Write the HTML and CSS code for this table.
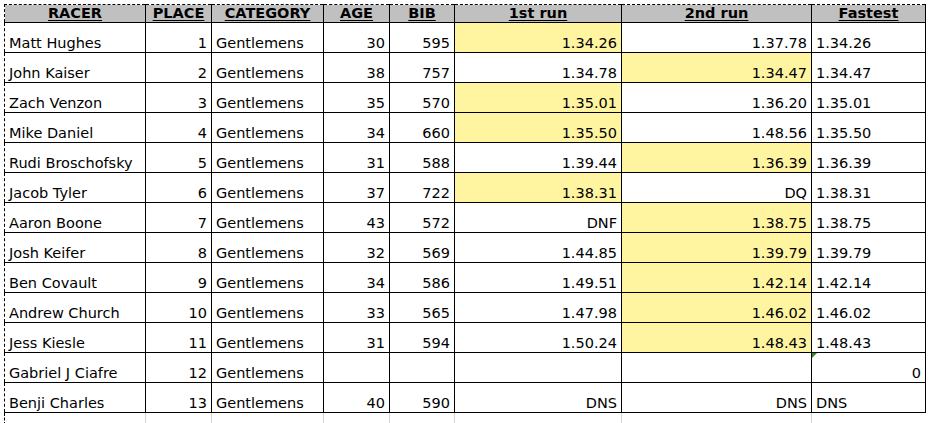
FILE: index.html
```html
<!DOCTYPE html>
<html>
<head>
<meta charset="utf-8">
<link rel="stylesheet" href="styles.css">
</head>
<body>
<table class="sheet">
  <colgroup>
    <col class="c-racer"><col class="c-place"><col class="c-cat"><col class="c-age"><col class="c-bib"><col class="c-run1"><col class="c-run2"><col class="c-fast">
  </colgroup>
  <thead>
    <tr>
      <th><u>RACER</u></th><th><u>PLACE</u></th><th><u>CATEGORY</u></th><th><u>AGE</u></th><th><u>BIB</u></th><th><u>1st run</u></th><th class="pb"><u>2nd run</u></th><th><u>Fastest</u></th>
    </tr>
  </thead>
  <tbody>
    <tr><td>Matt Hughes</td><td class="r">1</td><td>Gentlemens</td><td class="r">30</td><td class="r">595</td><td class="r hl">1.34.26</td><td class="r pb">1.37.78</td><td>1.34.26</td></tr>
    <tr><td>John Kaiser</td><td class="r">2</td><td>Gentlemens</td><td class="r">38</td><td class="r">757</td><td class="r">1.34.78</td><td class="r pb hl">1.34.47</td><td>1.34.47</td></tr>
    <tr><td>Zach Venzon</td><td class="r">3</td><td>Gentlemens</td><td class="r">35</td><td class="r">570</td><td class="r hl">1.35.01</td><td class="r pb">1.36.20</td><td>1.35.01</td></tr>
    <tr><td>Mike Daniel</td><td class="r">4</td><td>Gentlemens</td><td class="r">34</td><td class="r">660</td><td class="r hl">1.35.50</td><td class="r pb">1.48.56</td><td>1.35.50</td></tr>
    <tr><td>Rudi Broschofsky</td><td class="r">5</td><td>Gentlemens</td><td class="r">31</td><td class="r">588</td><td class="r">1.39.44</td><td class="r pb hl">1.36.39</td><td>1.36.39</td></tr>
    <tr><td>Jacob Tyler</td><td class="r">6</td><td>Gentlemens</td><td class="r">37</td><td class="r">722</td><td class="r hl">1.38.31</td><td class="r pb">DQ</td><td>1.38.31</td></tr>
    <tr><td>Aaron Boone</td><td class="r">7</td><td>Gentlemens</td><td class="r">43</td><td class="r">572</td><td class="r">DNF</td><td class="r pb hl">1.38.75</td><td>1.38.75</td></tr>
    <tr><td>Josh Keifer</td><td class="r">8</td><td>Gentlemens</td><td class="r">32</td><td class="r">569</td><td class="r">1.44.85</td><td class="r pb hl">1.39.79</td><td>1.39.79</td></tr>
    <tr><td>Ben Covault</td><td class="r">9</td><td>Gentlemens</td><td class="r">34</td><td class="r">586</td><td class="r">1.49.51</td><td class="r pb hl">1.42.14</td><td>1.42.14</td></tr>
    <tr><td>Andrew Church</td><td class="r">10</td><td>Gentlemens</td><td class="r">33</td><td class="r">565</td><td class="r">1.47.98</td><td class="r pb hl">1.46.02</td><td>1.46.02</td></tr>
    <tr><td>Jess Kiesle</td><td class="r">11</td><td>Gentlemens</td><td class="r">31</td><td class="r">594</td><td class="r">1.50.24</td><td class="r pb hl">1.48.43</td><td>1.48.43</td></tr>
    <tr><td>Gabriel J Ciafre</td><td class="r">12</td><td>Gentlemens</td><td class="r"></td><td class="r"></td><td class="r"></td><td class="r pb"></td><td class="r flag">0</td></tr>
    <tr><td>Benji Charles</td><td class="r">13</td><td>Gentlemens</td><td class="r">40</td><td class="r">590</td><td class="r">DNS</td><td class="r pb">DNS</td><td>DNS</td></tr>
    <tr class="empty"><td></td><td></td><td></td><td></td><td></td><td></td><td class="pb"></td><td></td></tr>
  </tbody>
</table>
</body>
</html>
```

FILE: styles.css
```css
html, body {
  margin: 0;
  padding: 0;
  background: #fff;
}

.sheet {
  margin: 4px 0 0 4px;
  border-collapse: collapse;
  table-layout: fixed;
  width: 921px;
  font-family: "DejaVu Sans", Verdana, sans-serif;
  font-size: 14.5px;
  color: #000;
  border-top: 1px dashed #000;
  border-left: 1px dashed #000;
}

.c-racer { width: 141px; }
.c-place { width: 66px; }
.c-cat { width: 112px; }
.c-age { width: 66px; }
.c-bib { width: 65px; }
.c-run1 { width: 167px; }
.c-run2 { width: 190px; }
.c-fast { width: 114px; }

.sheet th {
  height: 17px;
  padding: 0 3px;
  background: #c0c0c0;
  font-weight: bold;
  font-size: 14.5px;
  line-height: 17px;
  text-align: center;
  vertical-align: bottom;
  border: 1px solid #000;
  border-top: 1px dashed #000;
  white-space: nowrap;
  overflow: hidden;
}

.sheet th:first-child,
.sheet td:first-child {
  border-left: 1px dashed #000;
}

.sheet th u {
  text-underline-offset: 2px;
  text-decoration-thickness: 1px;
}

.sheet td {
  height: 29px;
  padding: 0 4px;
  line-height: 17px;
  vertical-align: bottom;
  border: 1px solid #000;
  white-space: nowrap;
  overflow: hidden;
}

.sheet .r { text-align: right; }

.sheet .hl { background: #fff5a0; }

.sheet .pb { border-right: 1px dashed #000; }

.sheet .flag { position: relative; }

.sheet .flag::before {
  content: "";
  position: absolute;
  left: 0;
  top: 0;
  border-top: 5px solid #2e8b1e;
  border-right: 5px solid transparent;
}

.sheet .empty td {
  height: 12px;
  padding: 0;
  border-bottom: none;
  border-top: 1px solid #000;
  border-left: 1px solid #d4d4d4;
  border-right: 1px solid #d4d4d4;
}

.sheet .empty td:first-child { border-left: 1px dashed #000; }
.sheet .empty td.pb { border-right: 1px dashed #000; }
.sheet .empty td:last-child { border-right: none; }
```
